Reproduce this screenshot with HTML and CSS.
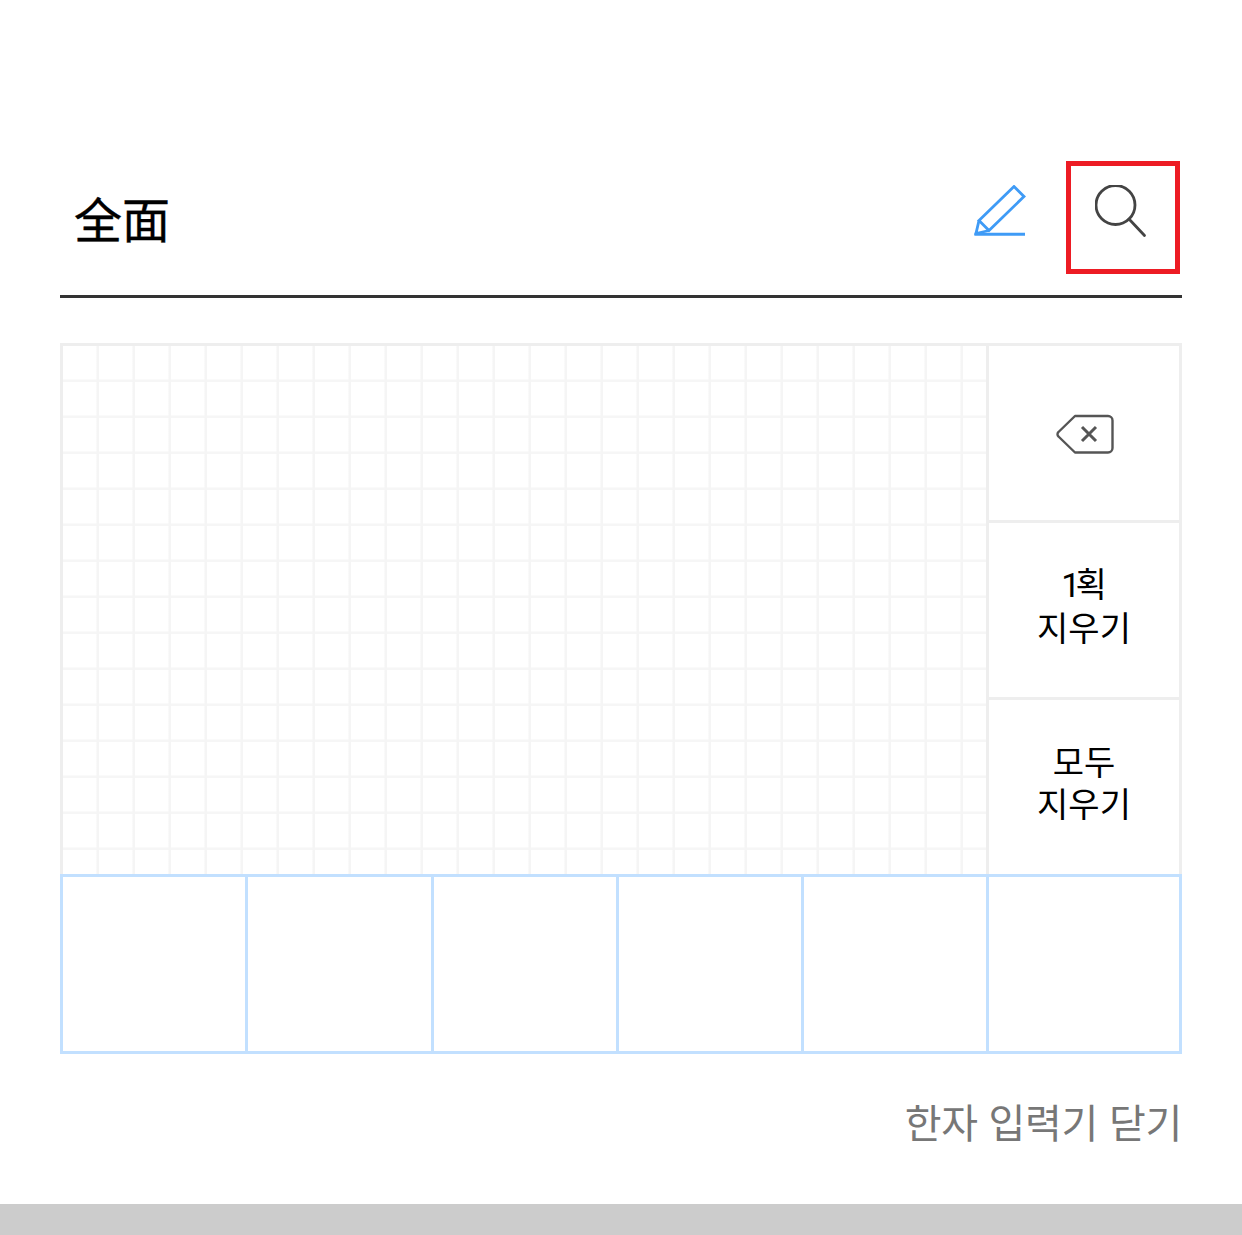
FILE: index.html
```html
<!DOCTYPE html>
<html lang="ko">
<head>
<meta charset="utf-8">
<title>한자 입력기</title>
<link rel="stylesheet" href="styles.css">
</head>
<body>
<main class="page">
  <div class="content">
    <header class="header">
      <h1 class="title" lang="zh">全面</h1>
      <button class="pen" type="button" aria-label="필기">
        <svg class="pen-icon" width="52" height="52" viewBox="0 0 52 52" fill="none" stroke="#3f9bf6" stroke-width="2.8">
          <path d="M40 1.500 50 11.500 15 45.500 5 35.500Z"/>
          <path d="M5 35.500 2 48.500 15 45.500"/>
          <path d="M0.500 49.300H51" stroke-width="3"/>
        </svg>
      </button>
      <button class="search" type="button" aria-label="검색">
        <svg width="56" height="56" viewBox="0 0 56 56" fill="none" stroke="#444" stroke-width="2.800">
          <circle cx="20.500" cy="20" r="19.500"/>
          <path d="M34 34 49.500 50.500" stroke-linecap="round"/>
        </svg>
      </button>
    </header>

    <section class="board">
      <div class="canvas"></div>
      <div class="keys">
        <button class="key" type="button" aria-label="지우기">
          <svg class="back-icon" width="60" height="40" viewBox="0 0 60 40" fill="none" stroke="#555" stroke-width="2.400">
            <path d="M20 2H53a4.500 4.500 0 0 1 4.500 4.500V34a4.500 4.500 0 0 1-4.500 4.500H20L3.500 22.500a3 3 0 0 1 0-4.500Z" stroke-linejoin="round"/>
            <path d="M27 13 41 27M41 13 27 27" stroke-width="3"/>
          </svg>
        </button>
        <button class="key" type="button"><span><span class="digit">1</span>획</span><span>지우기</span></button>
        <button class="key" type="button"><span>모두</span><span>지우기</span></button>
      </div>
      <div class="candidates">
        <div class="candidate"></div>
        <div class="candidate"></div>
        <div class="candidate"></div>
        <div class="candidate"></div>
        <div class="candidate"></div>
        <div class="candidate"></div>
      </div>
    </section>

    <div class="footer">
      <button class="close" type="button">한자 입력기 닫기</button>
    </div>
  </div>
  <div class="bar"></div>
</main>
</body>
</html>
```
FILE: styles.css
```css
* {
  box-sizing: border-box;
}

html,
body {
  margin: 0;
  padding: 0;
  background: #fff;
}

body {
  font-family: "Noto Sans CJK KR", "Noto Sans", sans-serif;
}

button {
  font: inherit;
  background: none;
  border: 0;
  padding: 0;
  margin: 0;
}

.page {
  height: 1235px;
  display: flex;
  flex-direction: column;
  overflow: hidden;
}

.content {
  flex: 1;
  padding: 161px 60px 0;
}

.header {
  display: flex;
  align-items: flex-start;
  height: 137px;
  border-bottom: 3px solid #333;
}

.title {
  margin: 0 auto 0 14px;
  font-size: 48px;
  font-weight: 400;
  -webkit-text-stroke: 0.4px #000;
  line-height: 70px;
  padding-top: 21px;
  color: #000;
  font-family: "Noto Sans CJK SC", "Noto Sans CJK KR", sans-serif;
}

.pen {
  display: flex;
  margin: 24px 40px 0 0;
}

.search {
  width: 114px;
  height: 113px;
  margin-right: 2px;
  border: 5px solid #ed1c24;
  display: flex;
  padding: 19px 0 0 24px;
}

.board {
  margin-top: 45px;
  display: grid;
  grid-template-columns: 1fr 190px;
  grid-template-rows: 528px 180px;
  height: 711px;
  border: solid #eee;
  border-width: 3px 3px 0;
}

.canvas {
  border-right: 3px solid #eee;
  background-color: #fff;
  background-image:
    linear-gradient(to right, transparent 33px, #f5f5f5 34px, #f5f5f5 36px),
    linear-gradient(to bottom, transparent 33px, #f6f6f6 34px, #f6f6f6 36px);
  background-size: 36px 36px;
}

.keys {
  display: grid;
  grid-template-rows: 177px 177px 174px;
}

.key {
  border-bottom: 3px solid #eee;
  font-size: 34px;
  line-height: 42px;
  padding-bottom: 11px;
  color: #000;
  text-align: center;
  display: flex;
  flex-direction: column;
  align-items: center;
  justify-content: center;
}

.key:last-child {
  border-bottom: 0;
}

.digit {
  font-family: Roboto, sans-serif;
  letter-spacing: -5px;
}

.back-icon {
  margin: 13px 0 0 2px;
}

.candidates {
  grid-column: 1 / -1;
  display: grid;
  grid-template-columns: 185px 186px 185px 185px 185px 190px;
  height: 180px;
  margin: 0 -3px;
  border: 3px solid #c2e0ff;
}

.candidate {
  border-right: 3px solid #c2e0ff;
}

.candidate:last-child {
  border-right: 0;
}

.footer {
  display: flex;
  justify-content: flex-end;
  margin-top: 38px;
}

.close {
  font-size: 40px;
  line-height: 58px;
  letter-spacing: -0.3px;
  color: #777;
}

.bar {
  height: 31px;
  background: #ccc;
}
```
